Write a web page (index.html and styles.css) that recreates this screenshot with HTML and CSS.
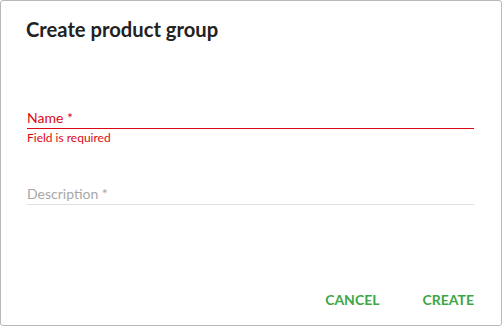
FILE: index.html
```html
<!DOCTYPE html>
<html>
<head>
<meta charset="utf-8">
<link rel="stylesheet" href="styles.css">
</head>
<body>
<div class="dialog">
  <h1 class="title">Create product group</h1>
  <div class="fields">
    <div class="field field-error">
      <div class="field-input"><span class="label">Name *</span></div>
      <div class="helper">Field is required</div>
    </div>
    <div class="field">
      <div class="field-input"><span class="label">Description *</span></div>
    </div>
  </div>
  <div class="actions">
    <button class="btn">CANCEL</button>
    <button class="btn">CREATE</button>
  </div>
</div>
</body>
</html>
```
FILE: styles.css
```css
html, body {
  margin: 0;
  padding: 0;
  background: #ffffff;
}
body {
  font-family: Lato, "Noto Sans", sans-serif;
}
.dialog {
  box-sizing: border-box;
  width: 502px;
  height: 326px;
  border: 1px solid #b8b8b8;
  border-radius: 3px;
  background: #fff;
  padding: 0 27px 0 25px;
  display: flex;
  flex-direction: column;
}
.title {
  margin: 15px 0 0 0;
  font-size: 20.2px;
  font-weight: 700;
  color: #222;
  line-height: 26px;
}
.fields {
  margin-top: 63px;
  display: flex;
  flex-direction: column;
  gap: 36px;
  padding-left: 1px;
}
.field-input {
  border-bottom: 1px solid #e0e0e0;
  height: 24px;
  display: flex;
  align-items: flex-end;
  padding-bottom: 2px;
  box-sizing: border-box;
}
.label {
  font-size: 14px;
  color: #a8a8a8;
  line-height: 16px;
}
.field-error .field-input {
  border-bottom: 1px solid #dc0a14;
}
.field-error .label {
  color: #dc0a14;
}
.helper {
  font-size: 12px;
  color: #dc0a14;
  line-height: 14px;
  margin-top: 2px;
}
.actions {
  margin-top: auto;
  margin-bottom: 16px;
  display: flex;
  justify-content: flex-end;
  gap: 43px;
}
.btn {
  border: none;
  background: none;
  padding: 0;
  font-family: Lato, "Noto Sans", sans-serif;
  font-size: 14px;
  font-weight: 700;
  color: #3ca744;
  line-height: 18px;
  cursor: pointer;
}
```
